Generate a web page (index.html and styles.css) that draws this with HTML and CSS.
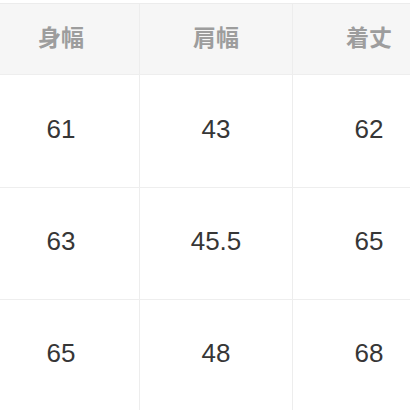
FILE: index.html
```html
<!DOCTYPE html>
<html lang="ja">
<head>
<meta charset="utf-8">
<link rel="stylesheet" href="styles.css">
</head>
<body>
<div class="frame">
<div class="table">
  <div class="row head">
    <div class="cell">身幅</div>
    <div class="cell">肩幅</div>
    <div class="cell">着丈</div>
  </div>
  <div class="row r1">
    <div class="cell">61</div>
    <div class="cell">43</div>
    <div class="cell">62</div>
  </div>
  <div class="row r2">
    <div class="cell">63</div>
    <div class="cell">45.5</div>
    <div class="cell">65</div>
  </div>
  <div class="row r3">
    <div class="cell">65</div>
    <div class="cell">48</div>
    <div class="cell">68</div>
  </div>
</div>
</div>
</body>
</html>
```

FILE: styles.css
```css
html, body {
  margin: 0;
  padding: 0;
  background: #ffffff;
}
.frame {
  width: 410px;
  height: 410px;
  overflow: hidden;
}
.table {
  margin-top: 3px;
  margin-left: -13px;
  width: 470px;
  border-top: 1px solid #ececec;
  display: flex;
  flex-direction: column;
}
.row {
  display: grid;
  grid-template-columns: 153px 153px 153px;
  border-bottom: 1px solid #eeeeee;
}
.cell {
  display: flex;
  align-items: center;
  justify-content: center;
  border-right: 1px solid #ededed;
  font-family: "Liberation Sans", "Noto Sans CJK JP", sans-serif;
  font-size: 26px;
  color: #363636;
  padding-bottom: 4px;
}
.head {
  height: 70px;
  background: #f6f6f6;
}
.head .cell {
  font-family: "Noto Sans CJK JP", sans-serif;
  font-size: 23px;
  font-weight: 700;
  color: #9d9d9d;
  padding-bottom: 7px;
}
.r1 { height: 112px; }
.r2 { height: 111px; }
.r3 { height: 111px; }
.row .cell:first-child { padding-right: 4px; }
```
